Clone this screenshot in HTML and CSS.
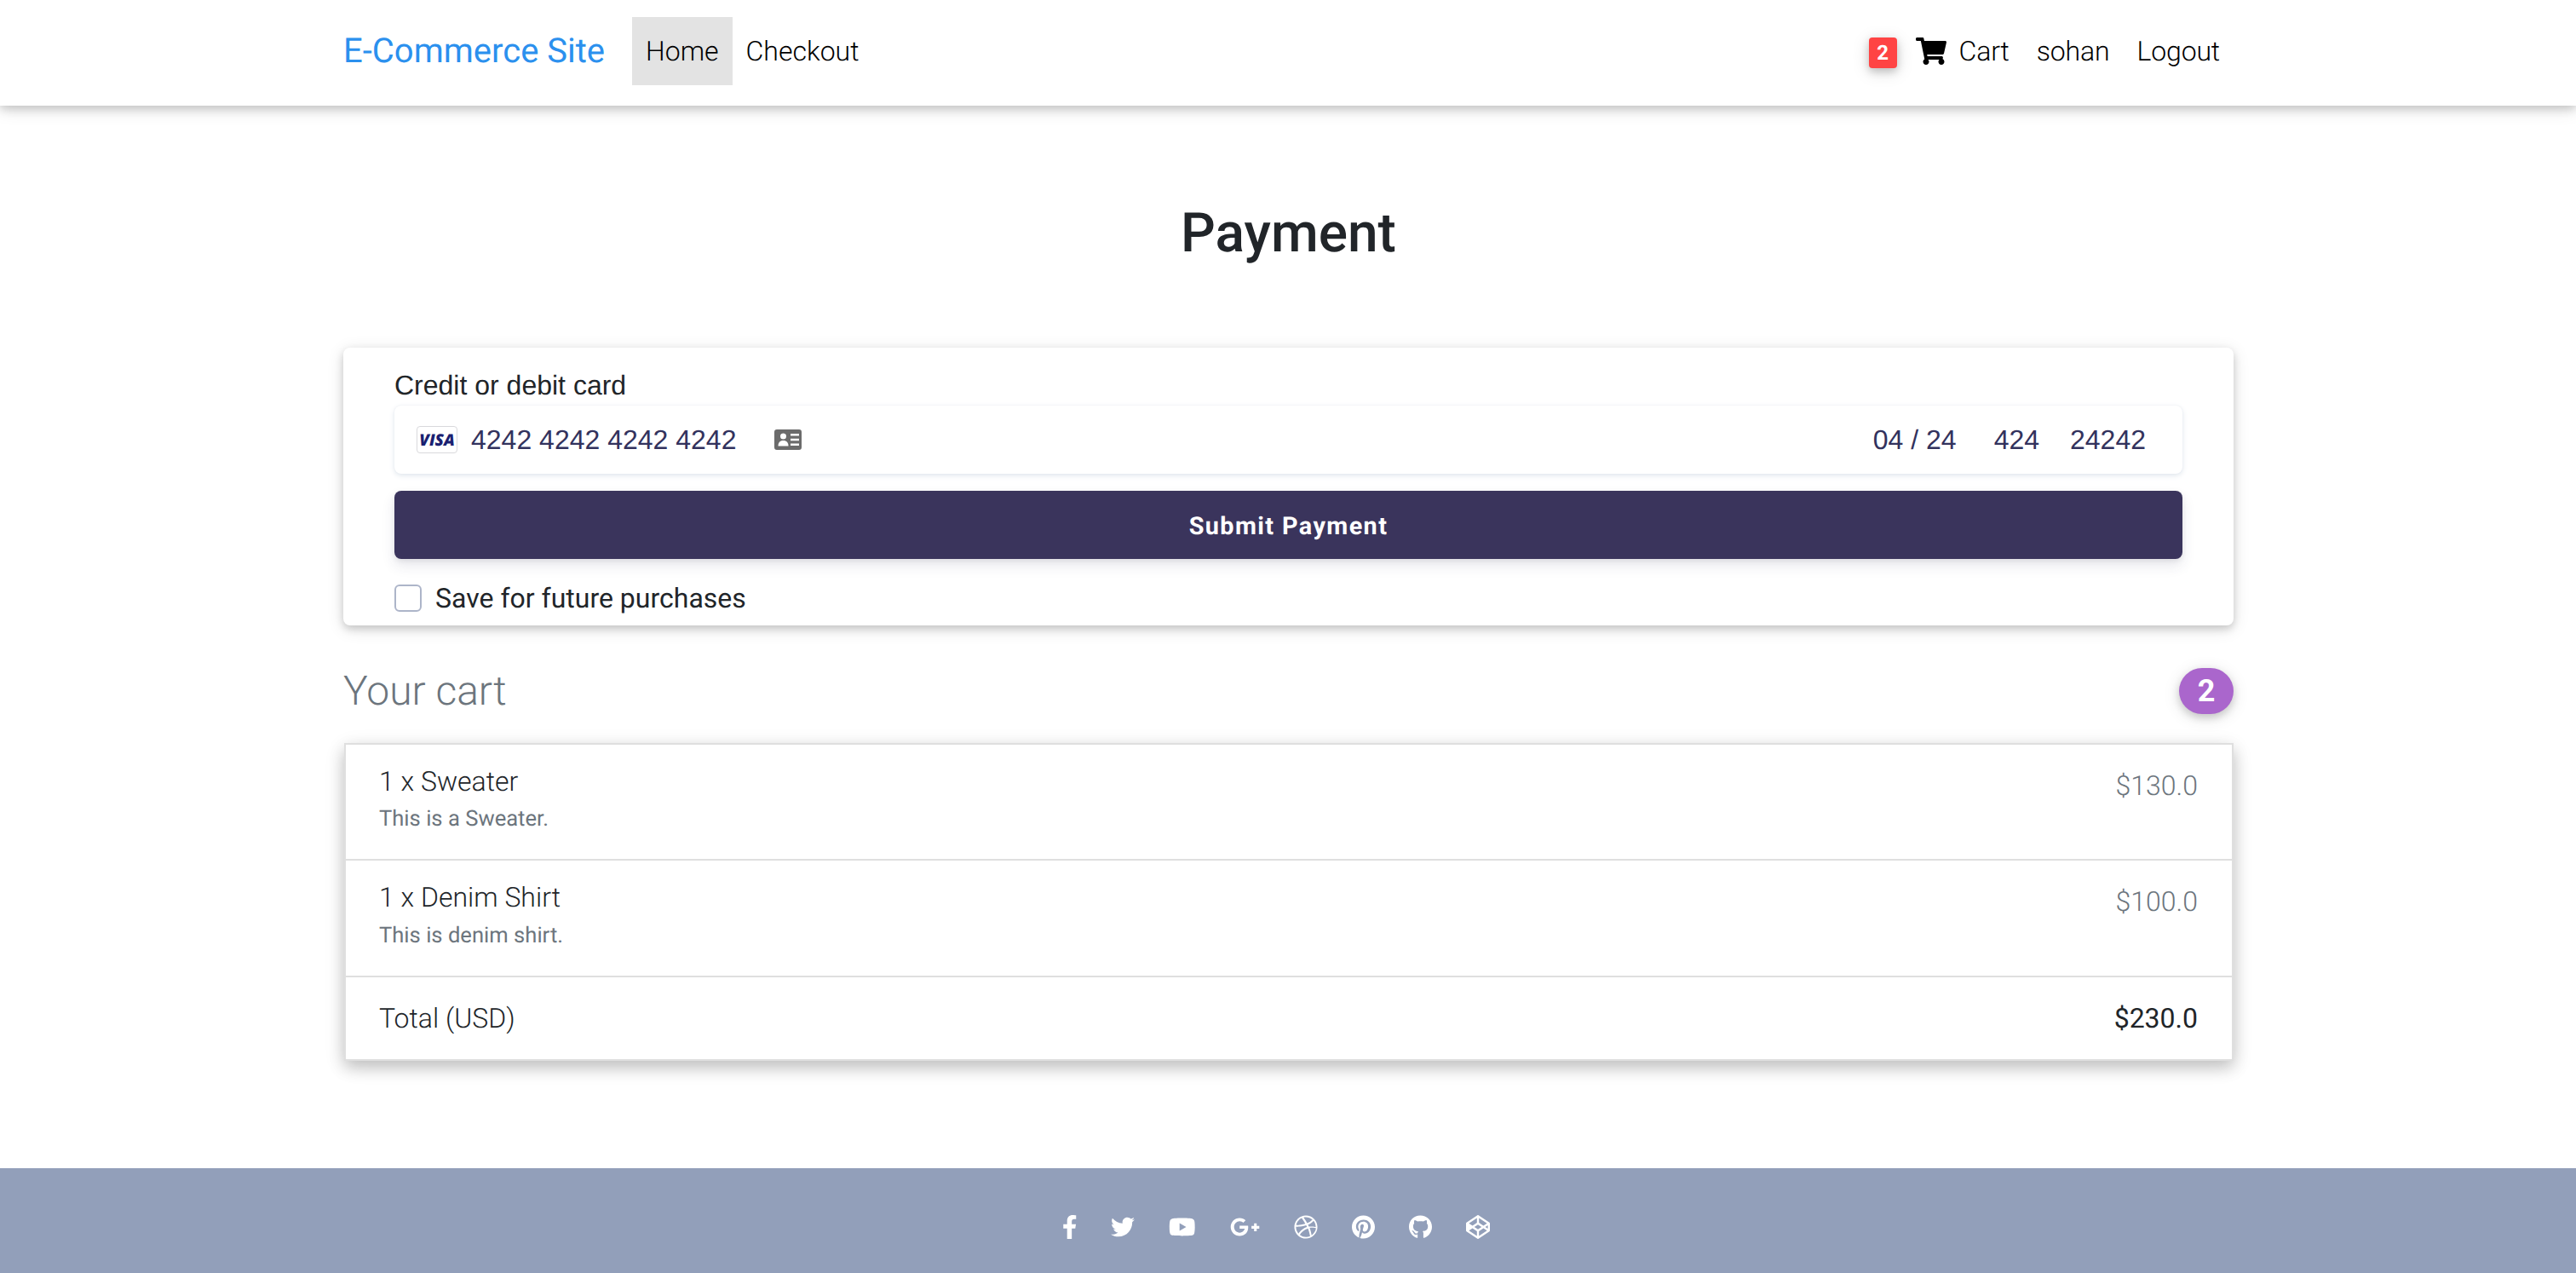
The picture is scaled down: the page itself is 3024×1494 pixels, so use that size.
FILE: index.html
```html
<!DOCTYPE html>
<html lang="en">
<head>
<meta charset="utf-8">
<title>Payment</title>
<link rel="stylesheet" href="styles.css">
</head>
<body>
<header class="navbar">
  <div class="container nav-inner">
    <a class="brand">E-Commerce Site</a>
    <a class="nav-link active">Home</a>
    <a class="nav-link">Checkout</a>
    <div class="nav-right">
      <span class="cart-badge">2</span>
      <svg class="cart-icon" viewBox="0 0 576 512"><path d="M528.12 301.319l47.273-208C578.806 78.301 567.391 64 551.99 64H159.208l-9.166-44.81C147.758 8.021 137.93 0 126.529 0H24C10.745 0 0 10.745 0 24v16c0 13.255 10.745 24 24 24h69.883l70.248 343.435C147.325 417.1 136 435.222 136 456c0 30.928 25.072 56 56 56s56-25.072 56-56c0-15.674-6.447-29.835-16.824-40h209.647C430.447 426.165 424 440.326 424 456c0 30.928 25.072 56 56 56s56-25.072 56-56c0-22.172-12.888-41.332-31.579-50.405l5.517-24.276c3.413-15.018-8.002-29.319-23.403-29.319H218.117l-6.545-32h293.145c11.206 0 20.92-7.754 23.403-18.681z"/></svg>
      <a class="nav-link cart-link">Cart</a>
      <a class="nav-link">sohan</a>
      <a class="nav-link">Logout</a>
    </div>
  </div>
</header>

<main class="container main">
  <h1 class="title">Payment</h1>

  <form class="pay-card">
    <label class="card-label">Credit or debit card</label>
    <div class="card-element">
      <span class="visa">VISA</span>
      <span class="card-number">4242 4242 4242 4242</span>
      <svg class="id-icon" viewBox="0 0 32 24"><path fill-rule="evenodd" d="M3 0h26a3 3 0 0 1 3 3v18a3 3 0 0 1-3 3H3a3 3 0 0 1-3-3V3a3 3 0 0 1 3-3zm7.500 4.500a3.500 3.500 0 1 0 0 7 3.500 3.500 0 0 0 0-7zM4.500 19.500h12c0-4-2-6.500-6-6.500s-6 2.500-6 6.500zM19 5v2.500h10V5zm0 5.800v2.500h10v-2.500zm0 5.800v2.500h10v-2.500z"/></svg>
      <span class="card-date">04 / 24</span>
      <span class="card-cvc">424</span>
      <span class="card-zip">24242</span>
    </div>
    <button class="submit" type="button">Submit Payment</button>
    <div class="save-row">
      <span class="checkbox"></span>
      <span class="save-label">Save for future purchases</span>
    </div>
  </form>

  <div class="cart-head">
    <h4 class="cart-title">Your cart</h4>
    <span class="pill">2</span>
  </div>

  <ul class="cart-list">
    <li class="cart-row">
      <div>
        <h6 class="item-name">1 x Sweater</h6>
        <small class="item-desc">This is a Sweater.</small>
      </div>
      <span class="item-price">$130.0</span>
    </li>
    <li class="cart-row">
      <div>
        <h6 class="item-name">1 x Denim Shirt</h6>
        <small class="item-desc">This is denim shirt.</small>
      </div>
      <span class="item-price">$100.0</span>
    </li>
    <li class="cart-row">
      <span>Total (USD)</span>
      <strong class="total">$230.0</strong>
    </li>
  </ul>
</main>

<footer class="footer">
  <div class="socials">
    <svg class="social" style="width:17.500px" viewBox="0 0 320 512"><path d="M279.14 288l14.22-92.66h-88.91v-60.13c0-25.35 12.42-50.06 52.24-50.06h40.42V6.26S260.43 0 225.36 0c-73.22 0-121.08 44.38-121.08 124.72v70.62H22.89V288h81.39v224h100.17V288z"/></svg>
    <svg class="social" style="width:28px" viewBox="0 0 512 512"><path d="M459.37 151.716c.325 4.548.325 9.097.325 13.645 0 138.72-105.583 298.558-298.558 298.558-59.452 0-114.68-17.219-161.137-47.106 8.447.974 16.568 1.299 25.34 1.299 49.055 0 94.213-16.568 130.274-44.832-46.132-.975-84.792-31.188-98.112-72.772 6.498.974 12.995 1.624 19.818 1.624 9.421 0 18.843-1.3 27.614-3.573-48.081-9.747-84.143-51.98-84.143-102.985v-1.299c13.969 7.797 30.214 12.67 47.431 13.319-28.264-18.843-46.781-51.005-46.781-87.391 0-19.492 5.197-37.36 14.294-52.954 51.655 63.675 129.3 105.258 216.365 109.807-1.624-7.797-2.599-15.918-2.599-24.04 0-57.828 46.782-104.934 104.934-104.934 30.213 0 57.502 12.67 76.67 33.137 23.715-4.548 46.456-13.32 66.599-25.34-7.798 24.366-24.366 44.833-46.132 57.827 21.117-2.273 41.584-8.122 60.426-16.243-14.292 20.791-32.161 39.308-52.628 54.253z"/></svg>
    <svg class="social" style="width:31.500px" viewBox="0 0 576 512"><path d="M549.655 124.083c-6.281-23.65-24.787-42.276-48.284-48.597C458.781 64 288 64 288 64S117.22 64 74.629 75.486c-23.497 6.322-42.003 24.947-48.284 48.597-11.412 42.867-11.412 132.305-11.412 132.305s0 89.438 11.412 132.305c6.281 23.65 24.787 41.5 48.284 47.821C117.22 448 288 448 288 448s170.78 0 213.371-11.486c23.497-6.321 42.003-24.171 48.284-47.821 11.412-42.867 11.412-132.305 11.412-132.305s0-89.438-11.412-132.305zm-317.51 213.508V175.185l142.739 81.205-142.739 81.201z"/></svg>
    <svg class="social" style="width:35px" viewBox="0 0 640 512"><path d="M386.061 228.496c1.834 9.692 3.143 19.384 3.143 31.956C389.204 370.205 315.599 448 204.8 448c-106.084 0-192-85.915-192-192s85.916-192 192-192c51.864 0 95.083 18.859 128.611 50.292l-52.126 50.03c-14.145-13.621-39.028-29.599-76.485-29.599-65.484 0-118.92 54.221-118.92 121.277 0 67.056 53.436 121.277 118.92 121.277 75.961 0 104.513-54.745 108.965-82.773H204.8v-66.009h181.261zm185.406 6.437V179.2h-56.001v55.733h-55.733v56.001h55.733v55.733h56.001v-55.733H627.2v-56.001h-55.733z"/></svg>
    <svg class="social" style="width:28px" viewBox="0 0 512 512"><path d="M256 8C119.252 8 8 119.252 8 256s111.252 248 248 248 248-111.252 248-248S392.748 8 256 8zm163.97 114.366c29.503 36.046 47.369 81.957 47.835 131.955-6.984-1.477-77.018-15.682-147.502-6.818-5.752-14.041-11.181-26.393-18.617-41.614 78.321-31.977 113.818-77.482 118.284-83.523zM396.421 97.87c-3.81 5.427-35.697 48.286-111.021 76.519-34.712-63.776-73.185-116.168-79.04-124.008 67.176-16.193 137.966 1.27 190.061 47.489zm-230.48-33.25c5.585 7.659 43.438 60.116 78.537 122.509-99.087 26.313-186.36 25.934-195.834 25.809C62.38 147.205 106.678 92.573 165.941 64.62zM44.17 256.323c0-2.166.043-4.322.108-6.473 9.268.19 111.92 1.513 217.706-30.146 6.064 11.868 11.857 23.915 17.174 35.949-76.599 21.575-146.194 83.527-180.531 142.306C64.794 360.405 44.17 310.73 44.17 256.323zm81.807 167.113c22.944-46.906 85.203-107.455 173.728-137.659 30.745 79.904 43.488 146.88 46.755 166.072-70.692 30.13-155.673 21.868-220.483-28.413zm253.389 8.606c-2.225-13.326-13.834-77.707-42.52-156.529 68.567-10.976 128.812 6.995 136.28 9.351-9.493 60.18-44.014 112.203-93.76 147.178z"/></svg>
    <svg class="social" style="width:27px" viewBox="0 0 496 512"><path d="M496 256c0 137-111 248-248 248-25.6 0-50.2-3.9-73.4-11.1 10.1-16.5 25.2-43.5 30.8-65 3-11.6 15.4-59 15.4-59 8.1 15.4 31.7 28.5 56.8 28.5 74.8 0 128.7-68.8 128.7-154.3 0-81.9-66.9-143.2-152.9-143.2-107 0-163.9 71.8-163.9 150.1 0 36.4 19.4 81.7 50.3 96.1 4.7 2.2 7.2 1.2 8.3-3.3.8-3.4 5-20.3 6.9-28.1.6-2.5.3-4.7-1.7-7.1-10.1-12.5-18.3-35.3-18.3-56.6 0-54.7 41.4-107.6 112-107.6 60.9 0 103.6 41.5 103.6 100.9 0 67.1-33.9 113.6-78 113.6-24.3 0-42.6-20.1-36.7-44.8 7-29.5 20.5-61.3 20.5-82.6 0-19-10.2-34.9-31.4-34.9-24.9 0-44.9 25.7-44.9 60.2 0 22 7.4 36.8 7.4 36.8s-24.5 103.8-29 123.2c-5 21.4-3 51.6-.9 71.2C65.4 450.9 0 361.1 0 256 0 119 111 8 248 8s248 111 248 248z"/></svg>
    <svg class="social" style="width:27px" viewBox="0 0 496 512"><path d="M165.9 397.4c0 2-2.3 3.6-5.2 3.6-3.3 0-5.6-1.6-5.6-3.6 0-2 2.3-3.6 5.2-3.6 3-.3 5.6 1.3 5.6 3.6zm-31.1-4.500c-.7 2 1.3 4.3 4.3 4.9 2.600 1 5.600 0 6.200-2s-1.300-4.300-4.300-5c-2.600-.7-5.500.3-6.200 2.100zm44.200-1.700c-2.900.7-4.900 2.600-4.600 4.900.3 2 2.900 3.300 5.900 2.600 2.900-.7 4.900-2.600 4.600-4.600-.3-1.900-3-3.200-5.900-2.900zM244.800 8C106.100 8 0 113.300 0 252c0 110.900 69.800 205.800 169.500 239.200 12.800 2.300 17.300-5.600 17.300-12.100 0-6.200-.3-40.400-.3-61.400 0 0-70 15-84.700-29.800 0 0-11.400-29.100-27.800-36.600 0 0-22.900-15.700 1.600-15.400 0 0 24.900 2 38.600 25.800 21.900 38.600 58.600 27.500 72.900 20.900 2.300-16 8.800-27.100 16-33.700-55.900-6.200-112.300-14.300-112.300-110.500 0-27.500 7.600-41.300 23.600-58.900-2.600-6.500-11.100-33.300 2.600-67.900 20.900-6.500 69 27 69 27 20-5.600 41.500-8.500 62.800-8.500s42.800 2.900 62.800 8.500c0 0 48.100-33.600 69-27 13.700 34.700 5.200 61.400 2.600 67.900 16 17.700 25.800 31.500 25.800 58.900 0 96.500-58.900 104.200-114.800 110.500 9.200 7.900 17 22.900 17 46.400 0 33.700-.3 75.400-.3 83.600 0 6.500 4.600 14.400 17.300 12.100C428.200 457.800 496 362.900 496 252 496 113.300 383.500 8 244.800 8z"/></svg>
    <svg class="social" style="width:28px" viewBox="0 0 512 512"><path d="M502.285 159.704l-234-156c-7.987-4.915-16.511-4.960-24.571 0l-234 156C3.714 163.703 0 170.847 0 177.989v155.999c0 7.143 3.714 14.286 9.715 18.286l234 156.022c7.987 4.915 16.511 4.960 24.571 0l234-156.022c6-3.999 9.715-11.143 9.715-18.286V177.989c-.001-7.142-3.715-14.286-9.716-18.285zM278 63.131l172.286 114.858-76.857 51.429L278 165.703V63.131zm-44 0v102.572l-95.429 63.715-76.857-51.429L234 63.131zM44 219.132v73.715l55.143-36.857L44 219.132zm190 229.715L61.714 333.989l76.857-51.429L234 346.275v102.572zm22-140.858l-77.715-52 77.715-52 77.715 52-77.715 52zm22 140.858V346.275l95.429-63.715 76.857 51.429L278 448.847zm190-156l-55.143-36.857L468 219.132v73.715z"/></svg>
  </div>
</footer>
</body>
</html>
```
FILE: styles.css
```css
* { box-sizing: border-box; }
html, body { margin: 0; padding: 0; }
body {
  min-height: 100vh;
  display: flex;
  flex-direction: column;
  font-family: Roboto, "Liberation Sans", sans-serif;
  font-weight: 300;
  font-size: 32px;
  line-height: 48px;
  color: #212529;
  background: #fff;
  text-rendering: geometricPrecision;
}
.container { width: 2280px; margin: 0 auto; padding: 0 30px 0 31px; }

.navbar {
  flex: none;
  height: 124px;
  background: #fff;
  box-shadow: 0 4px 10px rgba(0,0,0,.16), 0 4px 20px rgba(0,0,0,.12);
  position: relative;
}
.nav-inner { display: flex; align-items: center; height: 100%; padding-bottom: 4px; }
.brand { font-size: 40px; color: #2b90ee; font-weight: 400; margin-right: 32px; white-space: nowrap; }
.nav-link { padding: 16px; color: #000; height: 80px; line-height: 48px; white-space: nowrap; }
.nav-link.active { background: rgba(0,0,0,.11); }
.nav-right { margin-left: auto; display: flex; align-items: center; letter-spacing: -.15px; }
.cart-badge {
  width: 33px; height: 36px; margin-top: 4px; margin-right: 22px;
  background: #ff4444; color: #fff; border-radius: 4px;
  font-size: 24px; font-weight: 700; line-height: 36px; text-align: center;
  box-shadow: 0 4px 10px rgba(0,0,0,.18), 0 4px 20px rgba(0,0,0,.15);
}
.cart-icon { width: 36px; height: 32px; margin-right: -1px; fill: #000; }
.cart-link { padding-left: 16px; }

.main { flex: none; }
.title {
  margin: 0; padding-top: 111px; height: 284px;
  text-align: center;
  font-size: 64px; line-height: 77px; font-weight: 500;
}

.pay-card {
  height: 326px;
  padding: 24px 60px 0;
  background: #fff;
  border-radius: 8px;
  box-shadow: 0 4px 10px rgba(0,0,0,.16), 0 4px 20px rgba(0,0,0,.12);
}
.card-label {
  display: block; height: 44px;
  font-family: "Liberation Sans", Arial, sans-serif; font-weight: 400;
  font-size: 32px; line-height: 40px;
}
.card-element {
  height: 80px; display: flex; align-items: center;
  padding: 0 43px 0 26px;
  border-radius: 8px; background: #fff;
  box-shadow: 0 2px 6px #dfe5ec, 0 0 2px #eef1f5;
  font-family: "Liberation Sans", Arial, sans-serif; font-weight: 400;
  color: #32325d; font-size: 32px;
}
.visa {
  width: 48px; height: 32px; margin-right: 16px;
  border: 1px solid #d9d9dc; border-radius: 4px;
  display: flex; align-items: center; justify-content: center;
  font-family: "Open Sans", sans-serif; font-style: italic; font-weight: 800;
  font-size: 19px; line-height: 1; letter-spacing: 0; color: #1a1f71;
}
.card-number { width: 356px; }
.id-icon { width: 32px; height: 24px; fill: #6b6b6b; }
.card-date { margin-left: auto; }
.card-cvc { margin-left: 44px; }
.card-zip { margin-left: 36px; }
.submit {
  display: block; width: 100%; height: 80px; margin-top: 20px; padding: 3px 0 0;
  border: 0; border-radius: 8px;
  background: #3a345c; color: #fff;
  font-family: Roboto, sans-serif; font-weight: 700; font-size: 28.800px; letter-spacing: 1.400px;
  text-rendering: geometricPrecision;
  box-shadow: 0 8px 16px rgba(50,50,93,.11), 0 2px 6px rgba(0,0,0,.08);
}
.save-row { display: flex; align-items: center; gap: 16px; margin-top: 26px; }
.checkbox {
  width: 32px; height: 32px;
  border: 2px solid #adb5c9; border-radius: 6px; background: #fff;
}
.save-label { font-weight: 400; line-height: 40px; }

.cart-head { display: flex; justify-content: space-between; align-items: center; margin-top: 50px; height: 54px; }
.cart-title { margin: 0; font-size: 48px; line-height: 58px; font-weight: 300; color: #6c757d; }
.pill {
  width: 64px; height: 54px; border-radius: 27px;
  background: #aa66cc; color: #fff;
  font-size: 36px; font-weight: 700; line-height: 54px; text-align: center;
  box-shadow: 0 4px 10px rgba(0,0,0,.16), 0 4px 20px rgba(0,0,0,.12);
}

.cart-list {
  list-style: none; margin: 34px 0 0 1px; padding: 0;
  border-radius: 4px; background: #fff;
  box-shadow: 0 8px 18px rgba(0,0,0,.17), 0 6px 24px rgba(0,0,0,.12);
}
.cart-row {
  display: flex; justify-content: space-between;
  padding: 24px 40px 24px 39px;
  border: 2px solid #dfdfdf; border-bottom: 0;
}
.cart-row:last-child { border-bottom: 2px solid #dfdfdf; }
.item-name { margin: 0 0 2px; font-size: 32px; line-height: 38.400px; font-weight: 300; }
.item-desc { display: block; font-size: 25.600px; line-height: 46px; font-weight: 400; color: #6c757d; }
.item-price { color: #6c757d; }
.total { font-weight: 400; }

.footer {
  flex: none;
  margin-top: auto;
  height: 123px;
  background: #929fba;
  display: flex; justify-content: center; padding-top: 55px;
}
.socials { display: flex; gap: 40px; height: 28px; padding-right: 29px; align-items: center; }
.social { height: 28px; fill: #fff; flex: none; }
```
